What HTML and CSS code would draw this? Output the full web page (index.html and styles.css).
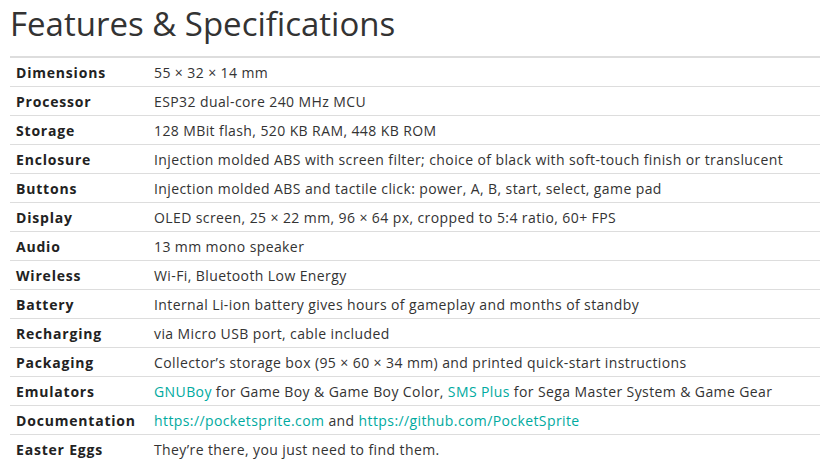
FILE: index.html
```html
<!DOCTYPE html>
<html>
<head>
<meta charset="utf-8">
<link rel="stylesheet" href="styles.css">
</head>
<body>
<div class="page">
  <h1 class="title">Features &amp; Specifications</h1>
  <table class="specs">
    <tr><th>Dimensions</th><td>55 × 32 × 14 mm</td></tr>
    <tr><th>Processor</th><td>ESP32 dual-core 240 MHz MCU</td></tr>
    <tr><th>Storage</th><td>128 MBit flash, 520 KB RAM, 448 KB ROM</td></tr>
    <tr><th>Enclosure</th><td>Injection molded ABS with screen filter; choice of black with soft-touch finish or translucent</td></tr>
    <tr><th>Buttons</th><td>Injection molded ABS and tactile click: power, A, B, start, select, game pad</td></tr>
    <tr><th>Display</th><td>OLED screen, 25 × 22 mm, 96 × 64 px, cropped to 5:4 ratio, 60+ FPS</td></tr>
    <tr><th>Audio</th><td>13 mm mono speaker</td></tr>
    <tr><th>Wireless</th><td>Wi-Fi, Bluetooth Low Energy</td></tr>
    <tr><th>Battery</th><td>Internal Li-ion battery gives hours of gameplay and months of standby</td></tr>
    <tr><th>Recharging</th><td>via Micro USB port, cable included</td></tr>
    <tr><th>Packaging</th><td>Collector’s storage box (95 × 60 × 34 mm) and printed quick-start instructions</td></tr>
    <tr><th>Emulators</th><td><a class="link" href="#">GNUBoy</a> for Game Boy &amp; Game Boy Color, <a class="link" href="#">SMS Plus</a> for Sega Master System &amp; Game Gear</td></tr>
    <tr><th>Documentation</th><td><a class="link" href="#">https://pocketsprite.com</a> and <a class="link" href="#">https://github.com/PocketSprite</a></td></tr>
    <tr><th>Easter Eggs</th><td>They’re there, you just need to find them.</td></tr>
  </table>
</div>
</body>
</html>
```

FILE: styles.css
```css
html, body {
  margin: 0;
  padding: 0;
  background: #fff;
}
.page {
  padding: 0 12px 0 10px;
  font-family: "Open Sans", "Noto Sans", sans-serif;
  color: #333;
}
.title {
  margin: 0;
  padding-top: 3px;
  height: 53px;
  font-size: 33px;
  font-weight: 400;
  line-height: 42px;
  color: #333;
}
.specs {
  width: 100%;
  border-collapse: collapse;
  font-size: 14px;
}
.specs tr:first-child th,
.specs tr:first-child td {
  border-top: 2px solid #ddd;
}
.specs th,
.specs td {
  border-top: 1px solid #ddd;
  padding: 1px 6px 0;
  height: 27px;
  line-height: 20px;
  text-align: left;
  vertical-align: middle;
}
.specs th {
  width: 126px;
  font-weight: 700;
  color: #222;
  letter-spacing: 0.8px;
}
.specs td {
  color: #333;
  letter-spacing: 0.4px;
}
.link {
  color: #00aaa0;
  text-decoration: none;
}
```
